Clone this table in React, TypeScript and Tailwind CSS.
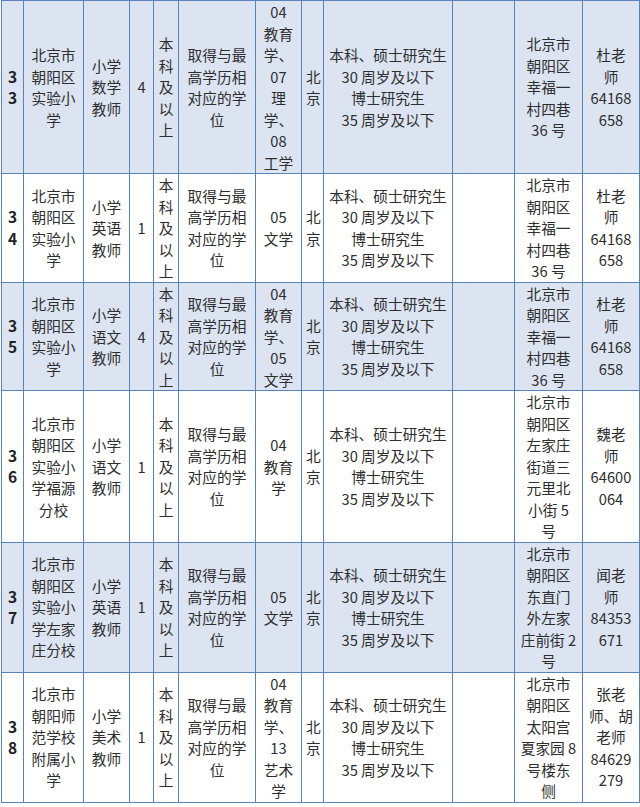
import React from "react";

type Row = {
  no: string[];
  school: string[];
  post: string[];
  count: string;
  major: string[];
  address: string[];
  contact: string[];
};

const degree = ["本", "科", "及", "以", "上"];
const diploma = ["取得与最", "高学历相", "对应的学", "位"];
const age = ["本科、硕士研究生", "30 周岁及以下", "博士研究生", "35 周岁及以下"];
const fuxing = ["北京市", "朝阳区", "幸福一", "村四巷", "36 号"];
const du = ["杜老", "师", "64168", "658"];

const rows: Row[] = [
  {
    no: ["3", "3"],
    school: ["北京市", "朝阳区", "实验小", "学"],
    post: ["小学", "数学", "教师"],
    count: "4",
    major: ["04", "教育", "学、", "07", "理", "学、", "08", "工学"],
    address: fuxing,
    contact: du,
  },
  {
    no: ["3", "4"],
    school: ["北京市", "朝阳区", "实验小", "学"],
    post: ["小学", "英语", "教师"],
    count: "1",
    major: ["05", "文学"],
    address: fuxing,
    contact: du,
  },
  {
    no: ["3", "5"],
    school: ["北京市", "朝阳区", "实验小", "学"],
    post: ["小学", "语文", "教师"],
    count: "4",
    major: ["04", "教育", "学、", "05", "文学"],
    address: fuxing,
    contact: du,
  },
  {
    no: ["3", "6"],
    school: ["北京市", "朝阳区", "实验小", "学福源", "分校"],
    post: ["小学", "语文", "教师"],
    count: "1",
    major: ["04", "教育", "学"],
    address: ["北京市", "朝阳区", "左家庄", "街道三", "元里北", "小街 5", "号"],
    contact: ["魏老", "师", "64600", "064"],
  },
  {
    no: ["3", "7"],
    school: ["北京市", "朝阳区", "实验小", "学左家", "庄分校"],
    post: ["小学", "英语", "教师"],
    count: "1",
    major: ["05", "文学"],
    address: ["北京市", "朝阳区", "东直门", "外左家", "庄前街 2", "号"],
    contact: ["闻老", "师", "84353", "671"],
  },
  {
    no: ["3", "8"],
    school: ["北京市", "朝阳师", "范学校", "附属小", "学"],
    post: ["小学", "美术", "教师"],
    count: "1",
    major: ["04", "教育", "学、", "13", "艺术", "学"],
    address: ["北京市", "朝阳区", "太阳宫", "夏家园 8", "号楼东", "侧"],
    contact: ["张老", "师、胡", "老师", "84629", "279"],
  },
];

const Lines = ({ lines }: { lines: string[] }) => (
  <>
    {lines.map((l, i) => (
      <div key={i} className="whitespace-nowrap">
        {l}
      </div>
    ))}
  </>
);

const cell = "border-[1.5px] border-[#5a82bd] p-0 text-center align-middle";

export default function App() {
  return (
    <div className="w-[640px] h-[807px] bg-white pl-[1px] overflow-hidden">
      <table
        className="table-fixed border-collapse w-[638px] text-[14.7px] leading-[21.5px] text-[#2e2e2e]"
        style={{ fontFamily: '"Noto Sans CJK SC", "Noto Sans", sans-serif' }}
      >
        <colgroup>
          <col className="w-[22px]" />
          <col className="w-[60px]" />
          <col className="w-[46px]" />
          <col className="w-[24px]" />
          <col className="w-[25px]" />
          <col className="w-[77px]" />
          <col className="w-[46px]" />
          <col className="w-[22px]" />
          <col className="w-[129px]" />
          <col className="w-[62px]" />
          <col className="w-[68px]" />
          <col className="w-[57px]" />
        </colgroup>
        <tbody>
          {rows.map((r, i) => (
            <tr key={i} className={i % 2 === 0 ? "bg-[#dce4f2]" : "bg-white"}>
              <td className={`${cell} font-bold text-[15.5px] text-[#222]`}>
                <Lines lines={r.no} />
              </td>
              <td className={cell}>
                <Lines lines={r.school} />
              </td>
              <td className={cell}>
                <Lines lines={r.post} />
              </td>
              <td className={cell}>{r.count}</td>
              <td className={cell}>
                <Lines lines={degree} />
              </td>
              <td className={cell}>
                <Lines lines={diploma} />
              </td>
              <td className={cell}>
                <Lines lines={r.major} />
              </td>
              <td className={`${cell} overflow-hidden`}>
                <div className="pl-[4px] text-left overflow-hidden">
                  <Lines lines={["北", "京"]} />
                </div>
              </td>
              <td className={cell}>
                <Lines lines={age} />
              </td>
              <td className={cell}></td>
              <td className={cell}>
                <Lines lines={r.address} />
              </td>
              <td className={cell}>
                <Lines lines={r.contact} />
              </td>
            </tr>
          ))}
        </tbody>
      </table>
    </div>
  );
}
